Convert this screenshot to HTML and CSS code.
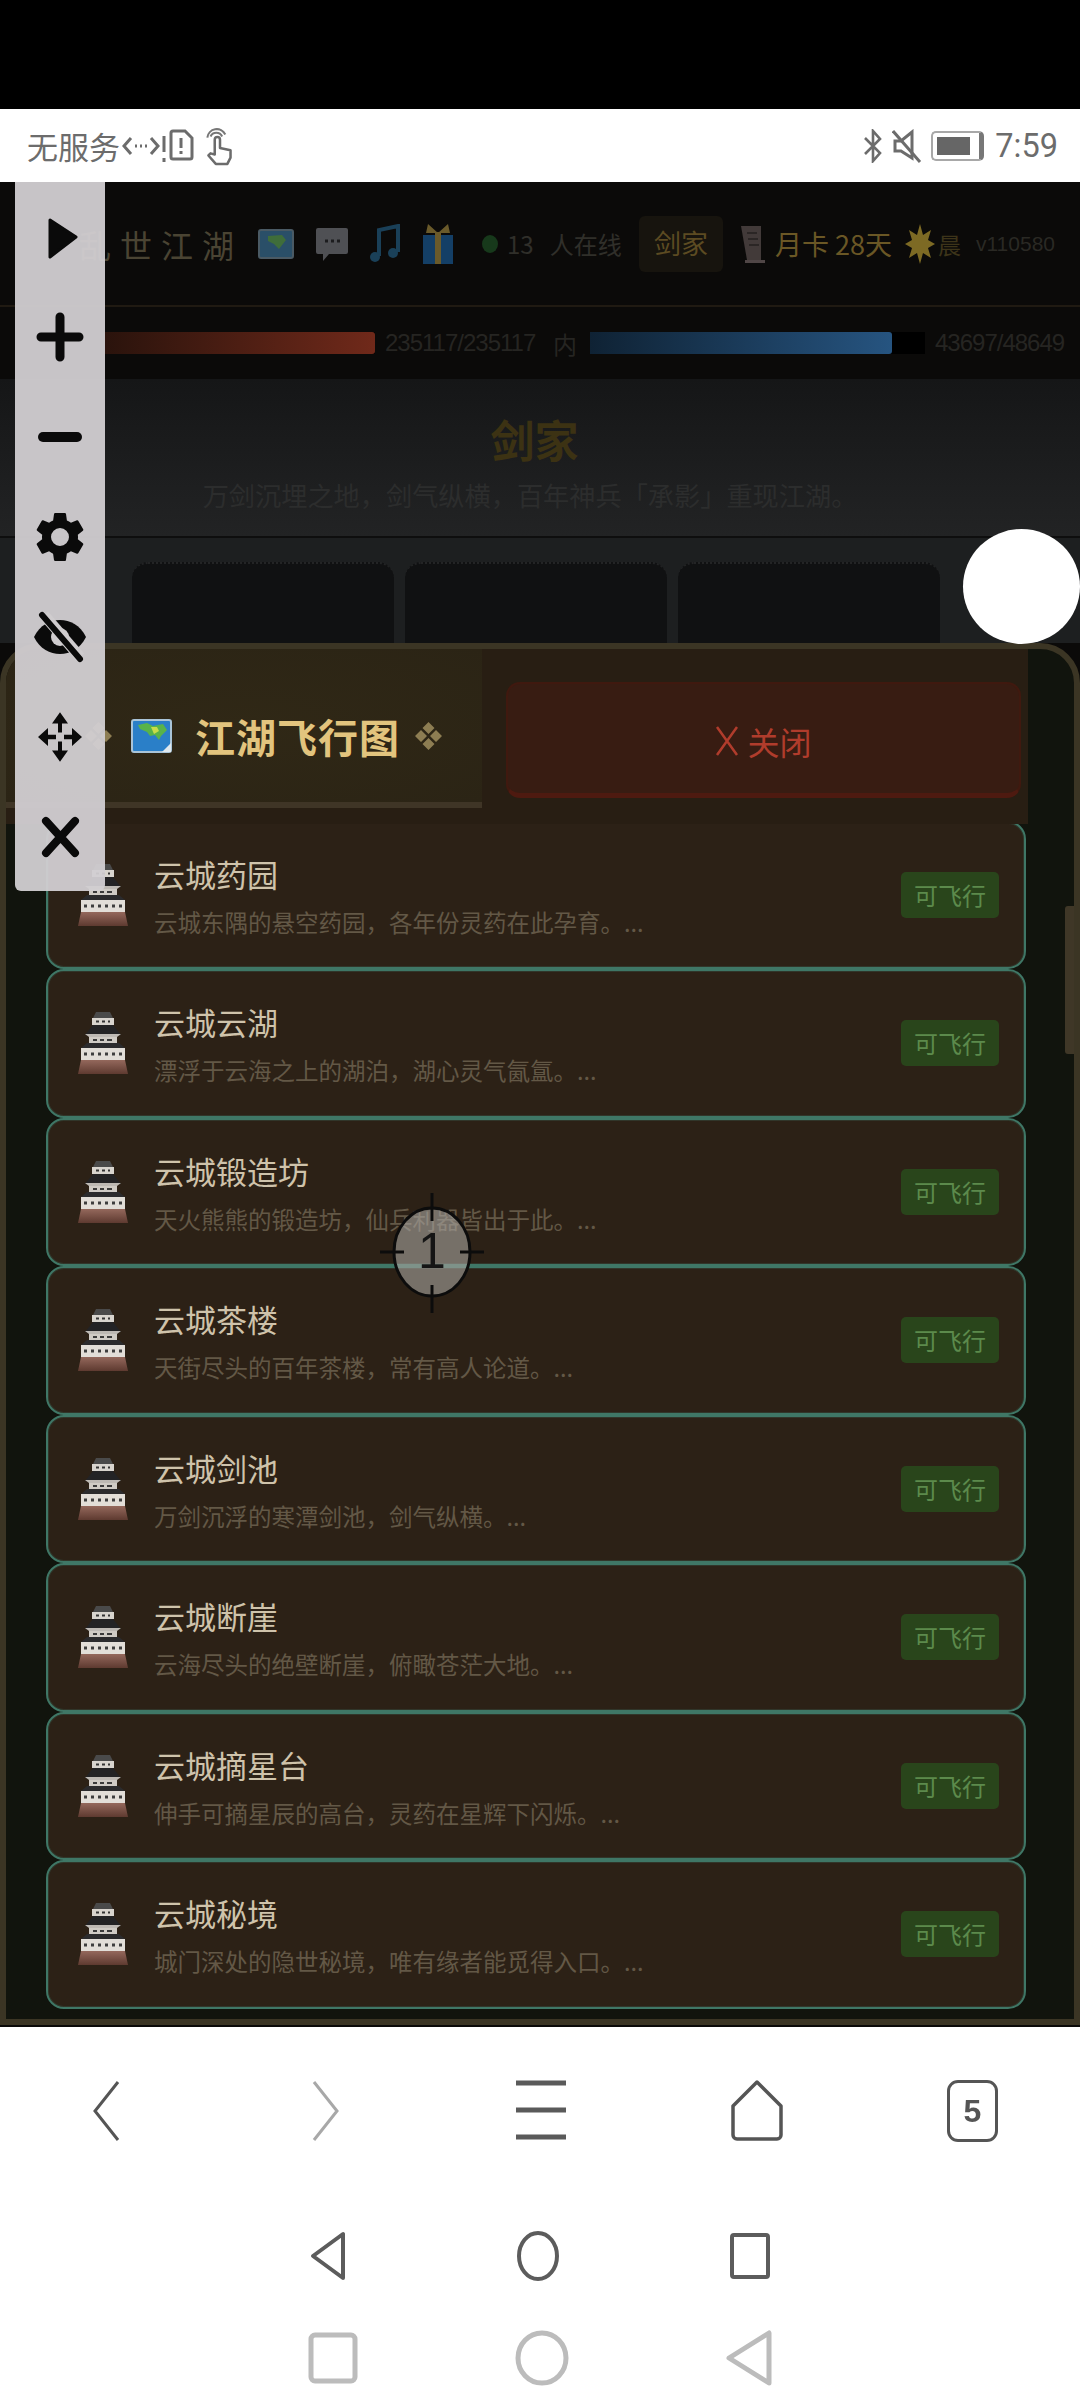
FILE: index.html
```html
<!DOCTYPE html>
<html lang="zh-CN">
<head>
  <meta charset="UTF-8" />
  <meta name="viewport" content="width=device-width, initial-scale=1.0"/>
  <title>江湖飞行图</title>
  <link rel="stylesheet" href="styles.css">
</head>
<body>
  <svg class="defs" width="0" height="0">
    <defs>
      <linearGradient id="castleBase" x1="0" y1="0" x2="0" y2="1">
        <stop offset="0" stop-color="#94685c"/>
        <stop offset="1" stop-color="#5e3a30"/>
      </linearGradient>
      <symbol id="castle" viewBox="0 0 50 62">
        <path d="M18 0h14l3 6H15z" fill="#4a4a4a"/>
        <rect x="14" y="6" width="22" height="7" fill="#d8d4ce"/>
        <path d="M18 9.500h3M24 9.500h3M30 9.500h2" stroke="#333" stroke-width="2"/>
        <path d="M15 13h20l8 10H7z" fill="#232325"/>
        <path d="M7 22h36l-4 3H11z" fill="#bdb9b4"/>
        <rect x="11" y="25" width="28" height="6" fill="#cfcbc5"/>
        <path d="M15 28h4M22 28h4M29 28h5" stroke="#3a3a3a" stroke-width="2"/>
        <path d="M9 31h32l6 5H3z" fill="#2b2b2d"/>
        <rect x="3" y="36" width="44" height="12" fill="#e2ded8"/>
        <path d="M6 42h38" stroke="#3e3e3e" stroke-width="3" stroke-dasharray="3 4"/>
        <path d="M3 48h44l3 14H0z" fill="url(#castleBase)"/>
      </symbol>
    </defs>
  </svg>

  <div class="top-black"></div>

  <div class="status-bar">
    <div class="status-left">
      <span class="status-text">无服务</span>
      <svg class="ic-data" width="38" height="24" viewBox="0 0 38 24"><path d="M9 4l-7 8 7 8M29 4l7 8-7 8" fill="none" stroke="#6c6c6c" stroke-width="3"/><path d="M13 12h2M18 12h2M23 12h2" stroke="#6c6c6c" stroke-width="3"/></svg>
      <svg class="ic-sim" width="36" height="38" viewBox="0 0 36 38"><path d="M4 9v16M4 31v4" stroke="#6c6c6c" stroke-width="3"/><path d="M13 4h12l7 7v19a2 2 0 0 1-2 2H13a2 2 0 0 1-2-2V6a2 2 0 0 1 2-2z" fill="none" stroke="#6c6c6c" stroke-width="3"/><path d="M21 11v10M21 24v3" stroke="#6c6c6c" stroke-width="3"/></svg>
      <svg class="ic-hand" width="30" height="40" viewBox="0 0 28 38"><path d="M5 10a6 6 0 0 1 11 0M2 11a9 9 0 0 1 17-3" fill="none" stroke="#777" stroke-width="2"/><path d="M9 27V13a2.400 2.400 0 0 1 5 0v8l10 2v7l-3 6H10L3 28l2-2z" fill="none" stroke="#6c6c6c" stroke-width="2.400" stroke-linejoin="round"/></svg>
    </div>
    <div class="status-right">
      <svg width="20" height="34" viewBox="0 0 20 34"><path d="M2 9l15 15-7 8V2l7 8L2 25" fill="none" stroke="#6c6c6c" stroke-width="2.600"/></svg>
      <svg class="ic-mute" width="30" height="34" viewBox="0 0 30 34"><path d="M3 12h6l11-9v26L9 22H3z" fill="none" stroke="#6c6c6c" stroke-width="3"/><path d="M1 2l27 31" stroke="#6c6c6c" stroke-width="3"/></svg>
      <div class="battery"><div class="battery-fill"></div></div>
      <span class="status-time">7:59</span>
    </div>
  </div>

  <div class="game">
    <div class="game-top">
      <span class="game-name">乱世江湖</span>
      <svg class="g-ic" width="36" height="32" viewBox="0 0 36 32"><rect x="1" y="2" width="34" height="28" rx="2" fill="#2a4f68" stroke="#4a5a64" stroke-width="2"/><path d="M10 8l14-1 4 5-7 9-5-5-6-3z" fill="#3f6d3a"/></svg>
      <svg class="g-ic" width="34" height="36" viewBox="0 0 34 36"><path d="M3 2h28a2 2 0 0 1 2 2v22a2 2 0 0 1-2 2H14l-6 7v-7H3a2 2 0 0 1-2-2V4a2 2 0 0 1 2-2z" fill="#4f5054"/><path d="M10 15h3M16 15h3M22 15h3" stroke="#1c1c1e" stroke-width="3"/></svg>
      <svg class="g-ic" width="30" height="40" viewBox="0 0 30 40"><path d="M9 32V6l19-4v26" fill="none" stroke="#1a4058" stroke-width="4"/><ellipse cx="5" cy="33" rx="5" ry="5" fill="#1a4058"/><ellipse cx="23" cy="29" rx="5" ry="5" fill="#1a4058"/></svg>
      <svg class="g-ic" width="34" height="40" viewBox="0 0 34 40"><rect x="2" y="11" width="30" height="29" fill="#143f66"/><rect x="14" y="8" width="6" height="32" fill="#6a5a2a"/><path d="M17 9L7 0l-2 9zM17 9l10-9 2 9z" fill="#6a5a2a"/></svg>
      <span class="online-dot"></span>
      <span class="online-text">13&nbsp;&nbsp;&nbsp;人在线</span>
      <span class="sect-btn">剑家</span>
      <svg class="g-scroll" width="28" height="40" viewBox="0 0 28 40"><path d="M2 2h20v34H8z" fill="#423a39"/><path d="M6 36h20v3H6z" fill="#504646"/><path d="M8 9h10M9 15h10M10 21h10" stroke="#2b2625" stroke-width="2"/></svg>
      <span class="month-card">月卡 28天</span>
      <svg class="g-sun" width="30" height="40" viewBox="0 0 30 40"><path d="M15 0l3 11 8-5-3 10 7 4-7 4 3 10-8-5-3 11-3-11-8 5 3-10-7-4 7-4-3-10 8 5z" fill="#7d6a24"/></svg>
      <span class="time-of-day">晨</span>
      <span class="version">v110580</span>
    </div>

    <div class="game-stats">
      <div class="bar bar-hp"><div class="bar-fill bar-fill-hp"></div></div>
      <span class="stat-num stat-hp">235117/235117</span>
      <span class="stat-label">内</span>
      <div class="bar bar-mp"><div class="bar-fill bar-fill-mp" style="width:90%"></div></div>
      <span class="stat-num">43697/48649</span>
    </div>

    <div class="sect-panel">
      <div class="sect-title">剑家</div>
      <div class="sect-desc">万剑沉埋之地，剑气纵横，百年神兵「承影」重现江湖。</div>
    </div>

    <div class="sect-cards">
      <div class="sect-card"></div>
      <div class="sect-card"></div>
      <div class="sect-card"></div>
    </div>

    <div class="modal">
      <div class="modal-main">
        <div class="modal-head">
          <div class="modal-tab">
            <svg class="diamond" width="27" height="30" viewBox="0 0 27 30"><path d="M13.500 1l6 6-6 6-6-6zM6 9l6 6-6 6-6-6zM21 9l6 6-6 6-6-6zM13.500 17l6 6-6 6-6-6z" fill="#8d7d52"/></svg>
            <svg class="map-ic" width="41" height="34" viewBox="0 0 41 34">
              <rect x="1" y="1" width="39" height="32" rx="2" fill="#2a7fc8" stroke="#a9c4d8" stroke-width="2"/>
              <path d="M7 6l9-2 6 3 10-2 4 6-6 6-2 4-4-5-5 1-3-4-7-3z" fill="#58b34a"/>
              <path d="M20 8l6 0 2 4-5 3z" fill="#c8dc48"/>
              <path d="M31 33l9-9v9z" fill="#dfe8ee"/>
            </svg>
            <span class="modal-title">江湖飞行图</span>
            <svg class="diamond" width="27" height="30" viewBox="0 0 27 30"><path d="M13.500 1l6 6-6 6-6-6zM6 9l6 6-6 6-6-6zM21 9l6 6-6 6-6-6zM13.500 17l6 6-6 6-6-6z" fill="#8d7d52"/></svg>
          </div>
          <div class="close-btn">
            <svg width="24" height="30" viewBox="0 0 24 30"><path d="M2 1l20 28M22 1L2 29" stroke="#b03c2c" stroke-width="2.500"/></svg>
            <span>关闭</span>
          </div>
        </div>

        <div class="fly-list">
          <div class="fly-item fly-item-first">
            <svg class="fly-icon"><use href="#castle"/></svg>
            <div class="fly-text"><div class="fly-name">云城药园</div><div class="fly-desc">云城东隅的悬空药园，各年份灵药在此孕育。...</div></div>
            <span class="fly-badge">可飞行</span>
          </div>
          <div class="fly-item">
            <svg class="fly-icon"><use href="#castle"/></svg>
            <div class="fly-text"><div class="fly-name">云城云湖</div><div class="fly-desc">漂浮于云海之上的湖泊，湖心灵气氤氲。...</div></div>
            <span class="fly-badge">可飞行</span>
          </div>
          <div class="fly-item">
            <svg class="fly-icon"><use href="#castle"/></svg>
            <div class="fly-text"><div class="fly-name">云城锻造坊</div><div class="fly-desc">天火熊熊的锻造坊，仙兵利器皆出于此。...</div></div>
            <span class="fly-badge">可飞行</span>
          </div>
          <div class="fly-item">
            <svg class="fly-icon"><use href="#castle"/></svg>
            <div class="fly-text"><div class="fly-name">云城茶楼</div><div class="fly-desc">天街尽头的百年茶楼，常有高人论道。...</div></div>
            <span class="fly-badge">可飞行</span>
          </div>
          <div class="fly-item">
            <svg class="fly-icon"><use href="#castle"/></svg>
            <div class="fly-text"><div class="fly-name">云城剑池</div><div class="fly-desc">万剑沉浮的寒潭剑池，剑气纵横。...</div></div>
            <span class="fly-badge">可飞行</span>
          </div>
          <div class="fly-item">
            <svg class="fly-icon"><use href="#castle"/></svg>
            <div class="fly-text"><div class="fly-name">云城断崖</div><div class="fly-desc">云海尽头的绝壁断崖，俯瞰苍茫大地。...</div></div>
            <span class="fly-badge">可飞行</span>
          </div>
          <div class="fly-item">
            <svg class="fly-icon"><use href="#castle"/></svg>
            <div class="fly-text"><div class="fly-name">云城摘星台</div><div class="fly-desc">伸手可摘星辰的高台，灵药在星辉下闪烁。...</div></div>
            <span class="fly-badge">可飞行</span>
          </div>
          <div class="fly-item">
            <svg class="fly-icon"><use href="#castle"/></svg>
            <div class="fly-text"><div class="fly-name">云城秘境</div><div class="fly-desc">城门深处的隐世秘境，唯有缘者能觅得入口。...</div></div>
            <span class="fly-badge">可飞行</span>
          </div>
        </div>
      </div>
      <div class="modal-strip"><div class="scroll-thumb"></div></div>
    </div>

    <!-- floating tools over the game -->
    <div class="tool-bar">
      <div class="tool"><svg width="60" height="60" viewBox="0 0 60 60"><path d="M20 13l26 17-26 20z" fill="#0a0a0a" stroke="#0a0a0a" stroke-width="3" stroke-linejoin="round"/></svg></div>
      <div class="tool"><svg width="60" height="60" viewBox="0 0 60 60"><path d="M11 30h38M30 10v40" stroke="#0a0a0a" stroke-width="9" stroke-linecap="round"/></svg></div>
      <div class="tool"><svg width="60" height="60" viewBox="0 0 60 60"><path d="M13 30h34" stroke="#0a0a0a" stroke-width="10" stroke-linecap="round"/></svg></div>
      <div class="tool"><svg width="60" height="60" viewBox="0 0 24 24"><path fill="#0a0a0a" d="M19.140 12.940c.04-.3.06-.61.06-.94 0-.32-.02-.64-.07-.94l2.030-1.580a.49.49 0 0 0 .12-.61l-1.920-3.320a.49.49 0 0 0-.59-.22l-2.390.96c-.5-.38-1.030-.7-1.620-.94l-.36-2.540a.48.48 0 0 0-.48-.41h-3.840a.48.48 0 0 0-.47.41l-.36 2.540c-.59.24-1.130.57-1.620.94l-2.390-.96a.49.49 0 0 0-.59.22L2.740 8.870a.48.48 0 0 0 .12.61l2.030 1.580c-.05.3-.09.63-.09.94s.02.64.07.94l-2.030 1.580a.49.49 0 0 0-.12.61l1.920 3.320c.12.22.37.29.59.22l2.390-.96c.5.38 1.030.7 1.620.94l.36 2.540c.05.24.24.41.48.41h3.840c.24 0 .44-.17.47-.41l.36-2.540c.59-.24 1.130-.56 1.620-.94l2.390.96c.22.08.47 0 .59-.22l1.920-3.320a.48.48 0 0 0-.12-.61l-2.010-1.580zM12 15.600A3.600 3.600 0 1 1 12 8.400a3.600 3.600 0 0 1 0 7.200z"/></svg></div>
      <div class="tool"><svg width="60" height="60" viewBox="0 0 60 60"><path d="M4 30c6-12 16-17 26-17s20 5 26 17c-6 12-16 17-26 17S10 42 4 30z" fill="#0a0a0a"/><circle cx="30" cy="30" r="9" fill="#cfccce"/><path d="M14 8l36 42" stroke="#cfccce" stroke-width="11"/><path d="M12 8l38 44" stroke="#0a0a0a" stroke-width="6" stroke-linecap="round"/></svg></div>
      <div class="tool"><svg width="48" height="54" viewBox="0 0 24 24" preserveAspectRatio="none"><path fill="#0a0a0a" d="M11 10V6H8l4-5 4 5h-3v4zM10 11H6V8l-5 4 5 4v-3h4zM14 11h4V8l5 4-5 4v-3h-4zM11 14v4H8l4 5 4-5h-3v-4z"/></svg></div>
      <div class="tool"><svg width="60" height="60" viewBox="0 0 60 60"><path d="M16 14l29 32M45 14L16 46" stroke="#0a0a0a" stroke-width="8" stroke-linecap="round"/></svg></div>
    </div>

    <div class="float-ball"></div>

    <div class="touch-mark">
      <svg width="104" height="120" viewBox="0 0 104 120">
        <ellipse cx="52" cy="59" rx="38" ry="44" fill="#a8a5a0" fill-opacity="0.6" stroke="#0c0c0c" stroke-width="3"/>
        <path d="M52 0v28M52 92v28M0 59h24M80 59h24" stroke="#0c0c0c" stroke-width="3"/>
      </svg>
      <span class="touch-num">1</span>
    </div>
  </div>

  <div class="browser-bar">
    <svg width="28" height="62" viewBox="0 0 28 62"><path d="M26 2L3 31l23 29" fill="none" stroke="#555" stroke-width="3"/></svg>
    <svg class="b-fwd" width="28" height="62" viewBox="0 0 28 62"><path d="M2 2l23 29L2 60" fill="none" stroke="#a8a8a8" stroke-width="3"/></svg>
    <svg class="b-menu" width="50" height="62" viewBox="0 0 50 62"><path d="M0 3h50M0 30h50M0 57h50" stroke="#5a5a5a" stroke-width="5"/></svg>
    <svg class="b-home" width="52" height="62" viewBox="0 0 52 62"><path d="M26 2L2 26v29a4 4 0 0 0 4 4h40a4 4 0 0 0 4-4V26z" fill="none" stroke="#555" stroke-width="3.500" stroke-linejoin="round"/></svg>
    <div class="tab-count">5</div>
  </div>

  <div class="nav-row nav-row-dark">
    <svg width="36" height="50" viewBox="0 0 36 50"><path d="M33 3v44L3 25z" fill="none" stroke="#5c5c5c" stroke-width="4" stroke-linejoin="round"/></svg>
    <svg width="42" height="50" viewBox="0 0 42 50"><ellipse cx="21" cy="25" rx="19" ry="23" fill="none" stroke="#5c5c5c" stroke-width="4"/></svg>
    <svg width="40" height="46" viewBox="0 0 40 46"><rect x="2" y="2" width="36" height="42" rx="2" fill="none" stroke="#5c5c5c" stroke-width="4"/></svg>
  </div>

  <div class="nav-row nav-row-light">
    <svg width="50" height="52" viewBox="0 0 50 52"><rect x="3" y="3" width="44" height="46" rx="4" fill="none" stroke="#bcbcbc" stroke-width="5"/></svg>
    <svg width="54" height="56" viewBox="0 0 54 56"><ellipse cx="27" cy="28" rx="24" ry="25" fill="none" stroke="#bcbcbc" stroke-width="5"/></svg>
    <svg width="46" height="56" viewBox="0 0 46 56"><path d="M43 3v50L3 28z" fill="none" stroke="#bcbcbc" stroke-width="5" stroke-linejoin="round"/></svg>
  </div>
</body>
</html>
```

FILE: styles.css
```css
:root {
  --olive: #3b3524;
  --item-bg: #2c2116;
  --teal: #3f7766;
}

* {
  box-sizing: border-box;
}

body {
  margin: 0;
  width: 1080px;
  height: 2403px;
  overflow: hidden;
  background: #fff;
  font-family: "Noto Sans CJK SC", "Noto Sans", sans-serif;
  filter: blur(0.5px); /* the source is a video frame, everything is a bit soft */
}

.defs {
  position: absolute;
}

.top-black {
  height: 109px;
  background: #000;
}

/* status bar */
.status-bar {
  height: 73px;
  background: #fff;
  display: flex;
  justify-content: space-between;
  align-items: center;
  padding: 0 22px 0 27px;
  color: #6c6c6c;
}

.status-left,
.status-right {
  display: flex;
  align-items: center;
}

.status-text {
  font-size: 31px;
  line-height: 40px;
}

.ic-data {
  margin-left: 2px;
}

.ic-hand {
  margin-left: 9px;
}

.ic-mute {
  margin-left: 9px;
}

.battery {
  width: 53px;
  height: 30px;
  margin-left: 9px;
  padding: 4px 9px 4px 4px;
  border: 2px solid #a8a8a8;
  border-right: 5px solid #777;
  border-radius: 5px;
}

.battery-fill {
  height: 100%;
  background: #666;
}

.status-time {
  margin-left: 11px;
  font-family: Roboto, sans-serif;
  font-size: 32.500px;
  line-height: 40px;
}

/* game behind the map */
.game {
  position: relative;
  height: 1845px;
  background: #0b0a09;
  overflow: hidden;
}

.game-top {
  height: 125px;
  padding: 0 0 0 79px;
  display: flex;
  align-items: center;
  border-bottom: 2px solid #201a12;
  color: #3c3a33;
}

.game-name {
  width: 179px;
  font-size: 32px;
  letter-spacing: 9px;
  color: #4a4433;
  white-space: nowrap;
}

.g-ic {
  margin-right: 21px;
  flex: none;
}

.online-dot {
  width: 16px;
  height: 18px;
  margin: 0 9px 0 6px;
  border-radius: 50%;
  background: #17391b;
}

.online-text {
  width: 132px;
  font-size: 24px;
  color: #302f2a;
  white-space: nowrap;
}

.sect-btn {
  width: 84px;
  height: 56px;
  border-radius: 6px;
  background: #17140e;
  color: #5c4b22;
  font-size: 27px;
  line-height: 54px;
  text-align: center;
}

.g-scroll {
  margin-left: 16px;
}

.month-card {
  width: 115px;
  margin-left: 8px;
  font-size: 27px;
  color: #6a5725;
  white-space: nowrap;
}

.g-sun {
  margin-left: 15px;
}

.time-of-day {
  width: 26px;
  margin-left: 3px;
  font-size: 23px;
  color: #3d3419;
}

.version {
  margin-left: 12px;
  font-family: "Liberation Sans", sans-serif;
  font-size: 21px;
  color: #2a2924;
}

.game-stats {
  height: 72px;
  padding-left: 105px;
  display: flex;
  align-items: center;
}

.bar {
  height: 22px;
  background: #000;
}

.bar-hp {
  width: 270px;
}

.bar-mp {
  width: 335px;
}

.bar-fill {
  height: 100%;
  border-radius: 0 3px 3px 0;
}

.bar-fill-hp {
  background: linear-gradient(to right, #2a130c, #70291a);
}

.bar-fill-mp {
  background: linear-gradient(to right, #0f2234, #265480);
}

.stat-num {
  margin-left: 10px;
  font-family: "Liberation Sans", sans-serif;
  font-size: 24px;
  letter-spacing: -1px;
  color: #262522;
  white-space: nowrap;
}

.stat-hp {
  width: 168px;
}

.stat-label {
  width: 37px;
  font-size: 24px;
  color: #262522;
}

.sect-panel {
  height: 159px;
  background: linear-gradient(#151617, #222324);
  border-bottom: 2px solid #0e0e0e;
  text-align: center;
}

.sect-title {
  padding: 29px 11px 0 0;
  font-size: 44px;
  line-height: 62px;
  font-weight: 700;
  color: #3c3213;
}

.sect-desc {
  margin-top: 7px;
  padding-right: 20px;
  font-size: 26.200px;
  line-height: 36px;
  color: #2c2d2d;
}

.sect-cards {
  height: 105px;
  padding: 24px 0 0 132px;
  display: flex;
  gap: 11px;
  background: #1d1f20;
}

.sect-card {
  width: 262px;
  border-radius: 16px 16px 0 0;
  border-top: 2px dotted #232425;
  background: #101112;
}

/* flight map */
.modal {
  height: 1382px;
  display: flex;
  border: 6px solid var(--olive);
  border-radius: 40px 40px 0 0;
  background: #11140d;
  overflow: hidden;
}

.modal-main {
  width: 1022px;
  display: flex;
  flex-direction: column;
}

.modal-head {
  height: 175px;
  flex: none;
  display: flex;
  background: #281e13;
}

.modal-tab {
  width: 476px;
  height: 159px;
  padding: 20px 0 0 79px;
  display: flex;
  align-items: center;
  gap: 15px;
  background: radial-gradient(ellipse at 50% 50%, #302816, #2b2415);
  border-bottom: 6px solid #3f3526;
}

.map-ic {
  margin-left: 4px;
}

.modal-title {
  margin: 0 0 0 8px;
  font-size: 40px;
  font-weight: 700;
  letter-spacing: 1px;
  color: #e2c47e;
  white-space: nowrap;
}

.close-btn {
  width: 515px;
  height: 116px;
  margin: 33px 0 0 24px;
  padding-top: 4px;
  display: flex;
  justify-content: center;
  align-items: center;
  gap: 8px;
  border: 2px solid #40190f;
  border-bottom: 5px solid #4e1a10;
  border-radius: 14px;
  background: #381c12;
  color: #b03c2c;
  font-size: 32px;
}

.fly-list {
  flex: 1;
  min-height: 0;
  padding: 0 2px 0 40px;
  overflow: hidden;
}

.fly-item {
  height: 148.500px;
  padding: 0 25px 0 30px;
  display: flex;
  align-items: center;
  border: 2px solid var(--teal);
  border-radius: 18px;
  background: var(--item-bg);
  box-shadow: inset 0 0 0 1px rgba(63, 119, 102, 0.25);
}

.fly-item-first {
  margin-top: -3.500px;
}

.fly-icon {
  width: 50px;
  height: 62px;
  flex: none;
}

.fly-text {
  flex: 1;
  min-width: 0;
  margin-left: 26px;
  padding-top: 2px;
}

.fly-name {
  font-size: 31px;
  line-height: 42px;
  color: #cfc3ab;
}

.fly-desc {
  margin-top: 10px;
  font-size: 23.500px;
  line-height: 34px;
  color: #635846;
  white-space: nowrap;
}

.fly-badge {
  width: 98px;
  height: 46px;
  flex: none;
  border-radius: 5px;
  background: #29451b;
  color: #5c8a4c;
  font-size: 24px;
  line-height: 46px;
  text-align: center;
}

.modal-strip {
  flex: 1;
  padding-top: 257px;
  display: flex;
  justify-content: flex-end;
}

.scroll-thumb {
  width: 9px;
  height: 148px;
  border-radius: 3px 0 0 3px;
  background: #3f3727;
}

/* floating widgets */
.tool-bar {
  position: absolute;
  left: 15px;
  top: 0;
  width: 90px;
  height: 709px;
  padding-top: 5px;
  display: flex;
  flex-direction: column;
  border-radius: 0 0 6px 6px;
  background: rgba(210, 207, 210, 0.95);
}

.tool {
  height: 100px;
  display: flex;
  justify-content: center;
  align-items: center;
}

.float-ball {
  position: absolute;
  left: 963px;
  top: 347px;
  width: 117px;
  height: 115px;
  border-radius: 50%;
  background: #fff;
}

.touch-mark {
  position: absolute;
  left: 380px;
  top: 1011px;
  width: 104px;
  height: 120px;
}

.touch-num {
  position: absolute;
  left: 0;
  right: 0;
  top: 28px;
  text-align: center;
  font-family: "Liberation Sans", sans-serif;
  font-size: 50px;
  line-height: 60px;
  color: #151515;
}

/* browser toolbar */
.browser-bar {
  height: 180px;
  padding: 53px 0 0 92px;
  display: flex;
  align-items: flex-start;
  background: #fff;
}

.b-fwd {
  margin-left: 192px;
}

.b-menu {
  margin-left: 176px;
}

.b-home {
  margin-left: 165px;
}

.tab-count {
  width: 51px;
  height: 62px;
  margin-left: 164px;
  border: 3px solid #555;
  border-radius: 11px;
  color: #555;
  font-family: "Liberation Sans", sans-serif;
  font-size: 32px;
  font-weight: 700;
  line-height: 56px;
  text-align: center;
}

.nav-row {
  height: 98px;
  display: flex;
  align-items: center;
  justify-content: center;
}

.nav-row-dark {
  gap: 171px;
}

.nav-row-light {
  gap: 157px;
  padding-top: 8px;
}
```
